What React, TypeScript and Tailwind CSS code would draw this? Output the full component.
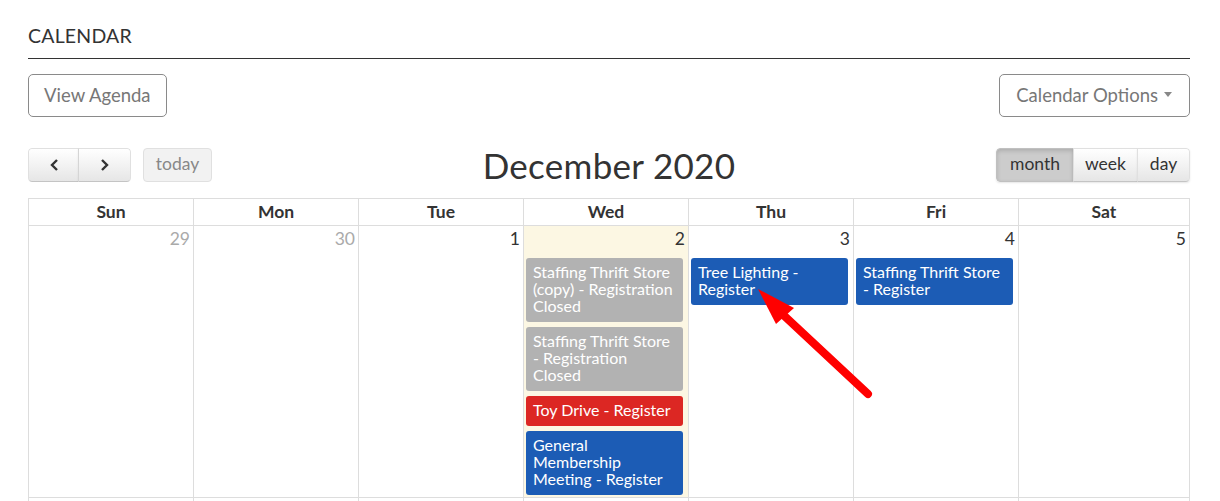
import React from "react";

type Ev = { lines: string[]; color: string };

const days = [
  { n: 29, muted: true, events: [] as Ev[] },
  { n: 30, muted: true, events: [] as Ev[] },
  { n: 1, events: [] as Ev[] },
  {
    n: 2,
    today: true,
    events: [
      { lines: ["Staffing Thrift Store", "(copy) - Registration", "Closed"], color: "bg-[#b2b2b2]" },
      { lines: ["Staffing Thrift Store", "- Registration", "Closed"], color: "bg-[#b2b2b2]" },
      { lines: ["Toy Drive - Register"], color: "bg-[#dc2723]" },
      { lines: ["General", "Membership", "Meeting - Register"], color: "bg-[#1c5cb5]" },
    ],
  },
  { n: 3, events: [{ lines: ["Tree Lighting -", "Register"], color: "bg-[#1c5cb5]" }] },
  { n: 4, events: [{ lines: ["Staffing Thrift Store", "- Register"], color: "bg-[#1c5cb5]" }] },
  { n: 5, events: [] as Ev[] },
];

const heads = ["Sun", "Mon", "Tue", "Wed", "Thu", "Fri", "Sat"];

const btn =
  "h-[34px] flex items-center justify-center border border-[#e0e0e0] border-b-[#c4c4c4] bg-linear-to-b from-white to-[#e6e6e6] text-[#333] text-[17.5px] shadow-[0_1px_2px_rgba(0,0,0,0.08)]";

export default function App() {
  return (
    <div className="relative w-[1220px] h-[501px] overflow-hidden bg-white pl-7 pr-[30px] font-['Lato',sans-serif] text-[#333]">
      {/* heading */}
      <div className="pt-[24px] pb-[10px] leading-[24px] text-[19.5px] tracking-[0.2px] border-b border-[#333]">
        CALENDAR
      </div>

      <div className="mt-[15px] flex justify-between">
        <button className="h-[43px] px-[15px] rounded-[5px] border border-[#8a8a8a] text-[18.5px] text-[#777]">
          View Agenda
        </button>
        <button className="h-[43px] pl-[16px] pr-[17px] rounded-[5px] border border-[#8a8a8a] text-[18.5px] text-[#777] flex items-center gap-[6px]">
          Calendar Options
          <span className="w-0 h-0 border-l-[4.5px] border-r-[4.5px] border-t-[5px] border-l-transparent border-r-transparent border-t-[#888] mb-[3px]" />
        </button>
      </div>

      {/* toolbar */}
      <div className="mt-[30px] h-[34px] grid grid-cols-[1fr_auto_1fr] items-center">
        <div className="flex items-center gap-[12px]">
          <div className="flex rounded-[4px] overflow-hidden">
            <div className={`${btn} w-[51px] rounded-l-[4px]`}>
              <svg width="10" height="14" viewBox="0 0 10 14">
                <polyline points="8,2 3,7 8,12" fill="none" stroke="#333" strokeWidth="2.4" />
              </svg>
            </div>
            <div className={`${btn} w-[53px] border-l-[#d5d5d5] -ml-px rounded-r-[4px]`}>
              <svg width="10" height="14" viewBox="0 0 10 14">
                <polyline points="2,2 7,7 2,12" fill="none" stroke="#333" strokeWidth="2.4" />
              </svg>
            </div>
          </div>
          <div className="h-[34px] w-[69px] flex items-center justify-center rounded-[4px] border border-[#e0e0e0] bg-[#f2f2f2] text-[17.5px] text-[#888]">
            today
          </div>
        </div>
        <div className="pt-[1px] text-[35px] leading-[34px] text-[#333] tracking-[0.3px]">December 2020</div>
        <div className="flex justify-end">
          <div className="flex rounded-[4px] overflow-hidden shadow-[0_1px_2px_rgba(0,0,0,0.1)]">
            <div className="h-[34px] w-[78px] flex items-center justify-center bg-[#cccccc] border border-[#c0c0c0] text-[17.5px] text-[#333] shadow-[inset_0_2px_4px_rgba(0,0,0,0.15)] rounded-l-[4px]">
              month
            </div>
            <div className={`${btn} w-[65px] -ml-px`}>week</div>
            <div className={`${btn} w-[53px] -ml-px rounded-r-[4px]`}>day</div>
          </div>
        </div>
      </div>

      {/* month grid */}
      <div className="mt-[17px] grid grid-cols-[165px_165px_165px_165px_165px_165px_1fr] border-l border-t border-[#dddddd]">
        {heads.map((h) => (
          <div
            key={h}
            className="h-[27px] flex items-center justify-center border-r border-b border-[#dddddd] text-[17.5px] font-bold text-[#333]"
          >
            {h}
          </div>
        ))}
        {days.map((d) => (
          <div
            key={d.n}
            className={`h-[272px] border-r border-b border-[#dddddd] ${d.today ? "bg-[#fcf7e3]" : "bg-white"}`}
          >
            <div
              className={`h-[32px] pt-[2px] pr-[3px] text-right text-[17.5px] leading-[22px] ${d.muted ? "text-[#aaaaaa]" : "text-[#333]"}`}
            >
              {d.n}
            </div>
            <div className="flex flex-col gap-[5px] pl-[2px] pr-[5px]">
              {d.events.map((e, i) => (
                <div
                  key={i}
                  className={`${e.color} rounded-[3px] pl-[7px] pr-[4px] pt-[5px] pb-[8px] text-white text-[16px] leading-[17px] whitespace-nowrap`}
                >
                  {e.lines.map((l) => (
                    <div key={l}>{l}</div>
                  ))}
                </div>
              ))}
            </div>
          </div>
        ))}
        {heads.map((h) => (
          <div key={"r2" + h} className="h-[40px] border-r border-[#dddddd]" />
        ))}
      </div>

      {/* red annotation arrow */}
      <svg className="absolute left-0 top-0 pointer-events-none" width="1220" height="501">
        <line x1="868" y1="394" x2="778" y2="310" stroke="#ff0000" strokeWidth="8" strokeLinecap="round" />
        <polygon points="758,289 776,324 794,308" fill="#ff0000" />
      </svg>
    </div>
  );
}
